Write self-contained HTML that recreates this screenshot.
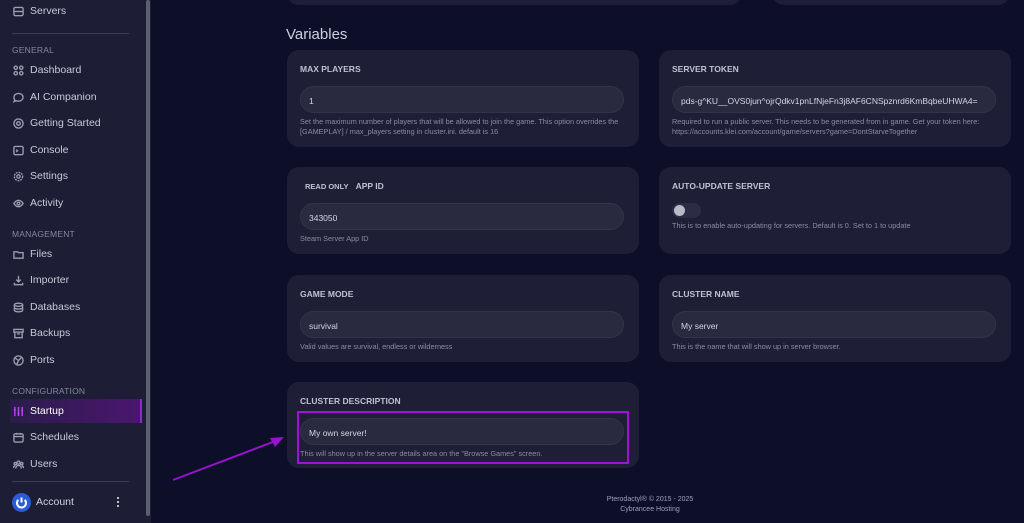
<!DOCTYPE html>
<html><head><style>
*{box-sizing:border-box;margin:0;padding:0}
body{width:1024px;height:523px;overflow:hidden;background:#0d0e27;font-family:"Liberation Sans",sans-serif;position:relative;color:#d0d2e0}
.sb{position:absolute;left:0;top:0;width:145px;height:523px;background:#1d1d36}
.scr{position:absolute;left:145px;top:0;width:6px;height:523px;background:#1d1d36}
.scr i{position:absolute;left:1px;top:0;width:4px;height:516px;background:#5a6070;border-radius:2px}
.it{position:absolute;left:13px;font-size:10.5px;color:#c8cad8;display:flex;align-items:center;gap:6px}
.it svg{width:11px;height:11px;stroke:#9a9cb0;fill:none;stroke-width:1.5}
.sec{position:absolute;left:12px;font-size:8.5px;color:#8587a3;letter-spacing:.2px}
.hr{position:absolute;left:12px;width:117px;height:1px;background:#3c3d55}
.act{position:absolute;left:10px;top:399px;width:132px;height:24px;background:linear-gradient(90deg,#2a1d4a,#4b1670);border-right:2px solid #8d2bd0}
.card{position:absolute;background:#1e1e36;border-radius:12px}
.lbl{position:absolute;left:13px;top:14px;font-size:8.5px;font-weight:bold;color:#bfc1d2}
.inp{position:absolute;left:13px;top:36px;width:324px;height:27px;background:#29293f;border:1px solid #33344a;border-radius:14px;font-size:8.5px;color:#d4d6e2;padding:9px 0 0 8px}
.hl{position:absolute;left:13px;top:67px;font-size:7.3px;color:#8a8ca6;line-height:10px;width:340px}
h2{position:absolute;left:286px;top:26px;font-size:15px;font-weight:normal;color:#ccd0e0}
</style></head><body>
<div class="sb"></div>
<div class="scr"><i></i></div>
<div class="it" style="top:5px"><svg viewBox="0 0 12 12"><rect x="1" y="1.5" width="10" height="9" rx="1.5"/><path d="M1 6h10"/></svg>Servers</div>
<div class="hr" style="top:33px"></div>
<div class="sec" style="top:45px">GENERAL</div>
<div class="it" style="top:64px"><svg viewBox="0 0 12 12"><circle cx="3" cy="3" r="1.8"/><circle cx="9" cy="3" r="1.8"/><circle cx="3" cy="9" r="1.8"/><circle cx="9" cy="9" r="1.8"/></svg>Dashboard</div>
<div class="it" style="top:91px"><svg viewBox="0 0 12 12"><path d="M6 1.5c3 0 5 2 5 4.3S9 10 6 10c-1 0-2-.2-2.7-.6L1.2 10.5l.7-2C1.3 7.8 1 6.8 1 5.8 1 3.5 3 1.5 6 1.5z"/></svg>AI Companion</div>
<div class="it" style="top:117px"><svg viewBox="0 0 12 12"><circle cx="6" cy="6" r="5"/><circle cx="6" cy="6" r="2"/></svg>Getting Started</div>
<div class="it" style="top:144px"><svg viewBox="0 0 12 12"><rect x="1" y="1.5" width="10" height="9" rx="1.5"/><path d="M3.5 5l1.5 1.3-1.5 1.3"/></svg>Console</div>
<div class="it" style="top:170px"><svg viewBox="0 0 12 12"><circle cx="6" cy="6" r="4.5" stroke-dasharray="2 1"/><circle cx="6" cy="6" r="1.8"/></svg>Settings</div>
<div class="it" style="top:197px"><svg viewBox="0 0 12 12"><path d="M1 6s2-3.5 5-3.5S11 6 11 6 9 9.5 6 9.5 1 6 1 6z"/><circle cx="6" cy="6" r="1.5"/></svg>Activity</div>
<div class="sec" style="top:229px">MANAGEMENT</div>
<div class="it" style="top:248px"><svg viewBox="0 0 12 12"><path d="M1 3h4l1 1h5v6H1z"/></svg>Files</div>
<div class="it" style="top:274px"><svg viewBox="0 0 12 12"><path d="M6 1v6M3.5 5L6 7.5 8.5 5M1.5 8.5v2h9v-2"/></svg>Importer</div>
<div class="it" style="top:301px"><svg viewBox="0 0 12 12"><ellipse cx="6" cy="3" rx="4.5" ry="1.7"/><path d="M1.5 3v6c0 1 2 1.7 4.5 1.7s4.5-.7 4.5-1.7V3M1.5 6c0 1 2 1.7 4.5 1.7s4.5-.7 4.5-1.7"/></svg>Databases</div>
<div class="it" style="top:327px"><svg viewBox="0 0 12 12"><rect x="1" y="1.5" width="10" height="3"/><path d="M2 4.5v6h8v-6M4.5 6.5h3"/></svg>Backups</div>
<div class="it" style="top:354px"><svg viewBox="0 0 12 12"><circle cx="6" cy="6" r="5"/><path d="M2 3l4 3 3.5-3.5M6 6l-2 4.5"/></svg>Ports</div>
<div class="sec" style="top:386px">CONFIGURATION</div>
<div class="act"></div>
<div class="it" style="top:405px;color:#fff"><svg viewBox="0 0 12 12" style="stroke:#b84cf0"><path d="M2 1v10M6 1v10M10 1v10M1 4h2M5 8h2M9 5h2"/></svg>Startup</div>
<div class="it" style="top:431px"><svg viewBox="0 0 12 12"><rect x="1" y="2" width="10" height="9" rx="1.5"/><path d="M1 5h10M4 1v2M8 1v2"/></svg>Schedules</div>
<div class="it" style="top:458px"><svg viewBox="0 0 12 12"><circle cx="6" cy="4" r="1.7"/><circle cx="2.5" cy="5" r="1.3"/><circle cx="9.5" cy="5" r="1.3"/><path d="M3 10.5c0-2 1.3-3.5 3-3.5s3 1.5 3 3.5M0.5 10c0-1.5.8-2.5 2-2.5M11.5 10c0-1.5-.8-2.5-2-2.5"/></svg>Users</div>
<div class="hr" style="top:481px"></div>
<div style="position:absolute;left:12px;top:493px;width:19px;height:19px;border-radius:50%;background:#2a5bd8"><svg viewBox="0 0 19 19" width="19" height="19"><path d="M6.3 6.8a4.5 4.5 0 1 0 6.4 0" stroke="#fff" stroke-width="2" fill="none"/><path d="M9.5 4.5v5" stroke="#fff" stroke-width="2"/></svg></div>
<div style="position:absolute;left:36px;top:496px;font-size:10.5px;color:#d0d2e0">Account</div>
<div style="position:absolute;left:117px;top:496px;width:2px;height:12px;background:radial-gradient(circle,#ccc 1px,transparent 1.2px) 0 0/2px 4px"></div>

<div class="card" style="left:287px;top:-20px;width:455px;height:25px"></div>
<div class="card" style="left:772px;top:-20px;width:238px;height:25px"></div>
<h2>Variables</h2>

<div class="card" style="left:287px;top:50px;width:352px;height:97px">
<div class="lbl">MAX PLAYERS</div><div class="inp">1</div>
<div class="hl">Set the maximum number of players that will be allowed to join the game. This option overrides the [GAMEPLAY] / max_players setting in cluster.ini. default is 16</div></div>
<div class="card" style="left:659px;top:50px;width:352px;height:97px">
<div class="lbl">SERVER TOKEN</div><div class="inp">pds-g^KU__OVS0jun^ojrQdkv1pnLfNjeFn3j8AF6CNSpznrd6KmBqbeUHWA4=</div>
<div class="hl">Required to run a public server. This needs to be generated from in game. Get your token here: https://accounts.klei.com/account/game/servers?game=DontStarveTogether</div></div>

<div class="card" style="left:287px;top:167px;width:352px;height:87px">
<div class="lbl" style="left:18px;top:14px"><span style="font-size:7.5px">READ ONLY</span>&nbsp;&nbsp;&nbsp;APP ID</div><div class="inp">343050</div>
<div class="hl">Steam Server App ID</div></div>
<div class="card" style="left:659px;top:167px;width:352px;height:87px">
<div class="lbl">AUTO-UPDATE SERVER</div>
<div style="position:absolute;left:13px;top:36px;width:29px;height:15px;border-radius:8px;background:#2c2d44"><div style="position:absolute;left:2px;top:2px;width:11px;height:11px;border-radius:50%;background:#b8bac8"></div></div>
<div class="hl" style="top:54px">This is to enable auto-updating for servers. Default is 0. Set to 1 to update</div></div>

<div class="card" style="left:287px;top:275px;width:352px;height:87px">
<div class="lbl">GAME MODE</div><div class="inp">survival</div>
<div class="hl">Valid values are survival, endless or wilderness</div></div>
<div class="card" style="left:659px;top:275px;width:352px;height:87px">
<div class="lbl">CLUSTER NAME</div><div class="inp">My server</div>
<div class="hl">This is the name that will show up in server browser.</div></div>

<div class="card" style="left:287px;top:382px;width:352px;height:86px">
<div class="lbl">CLUSTER DESCRIPTION</div><div class="inp">My own server!</div>
<div class="hl">This will show up in the server details area on the "Browse Games" screen.</div></div>
<div style="position:absolute;left:297px;top:411px;width:332px;height:53px;border:2px solid #a210d8"></div>

<svg style="position:absolute;left:0;top:0" width="1024" height="523"><path d="M173 480L278 440" stroke="#9a12d0" stroke-width="2"/><path d="M284 437L270 438 275 447z" fill="#9a12d0"/></svg>

<div style="position:absolute;left:600px;top:495px;width:100px;text-align:center;font-size:7px;color:#a0a2b8;line-height:10px">Pterodactyl® © 2015 - 2025<br>Cybrancee Hosting</div>
</body></html>
